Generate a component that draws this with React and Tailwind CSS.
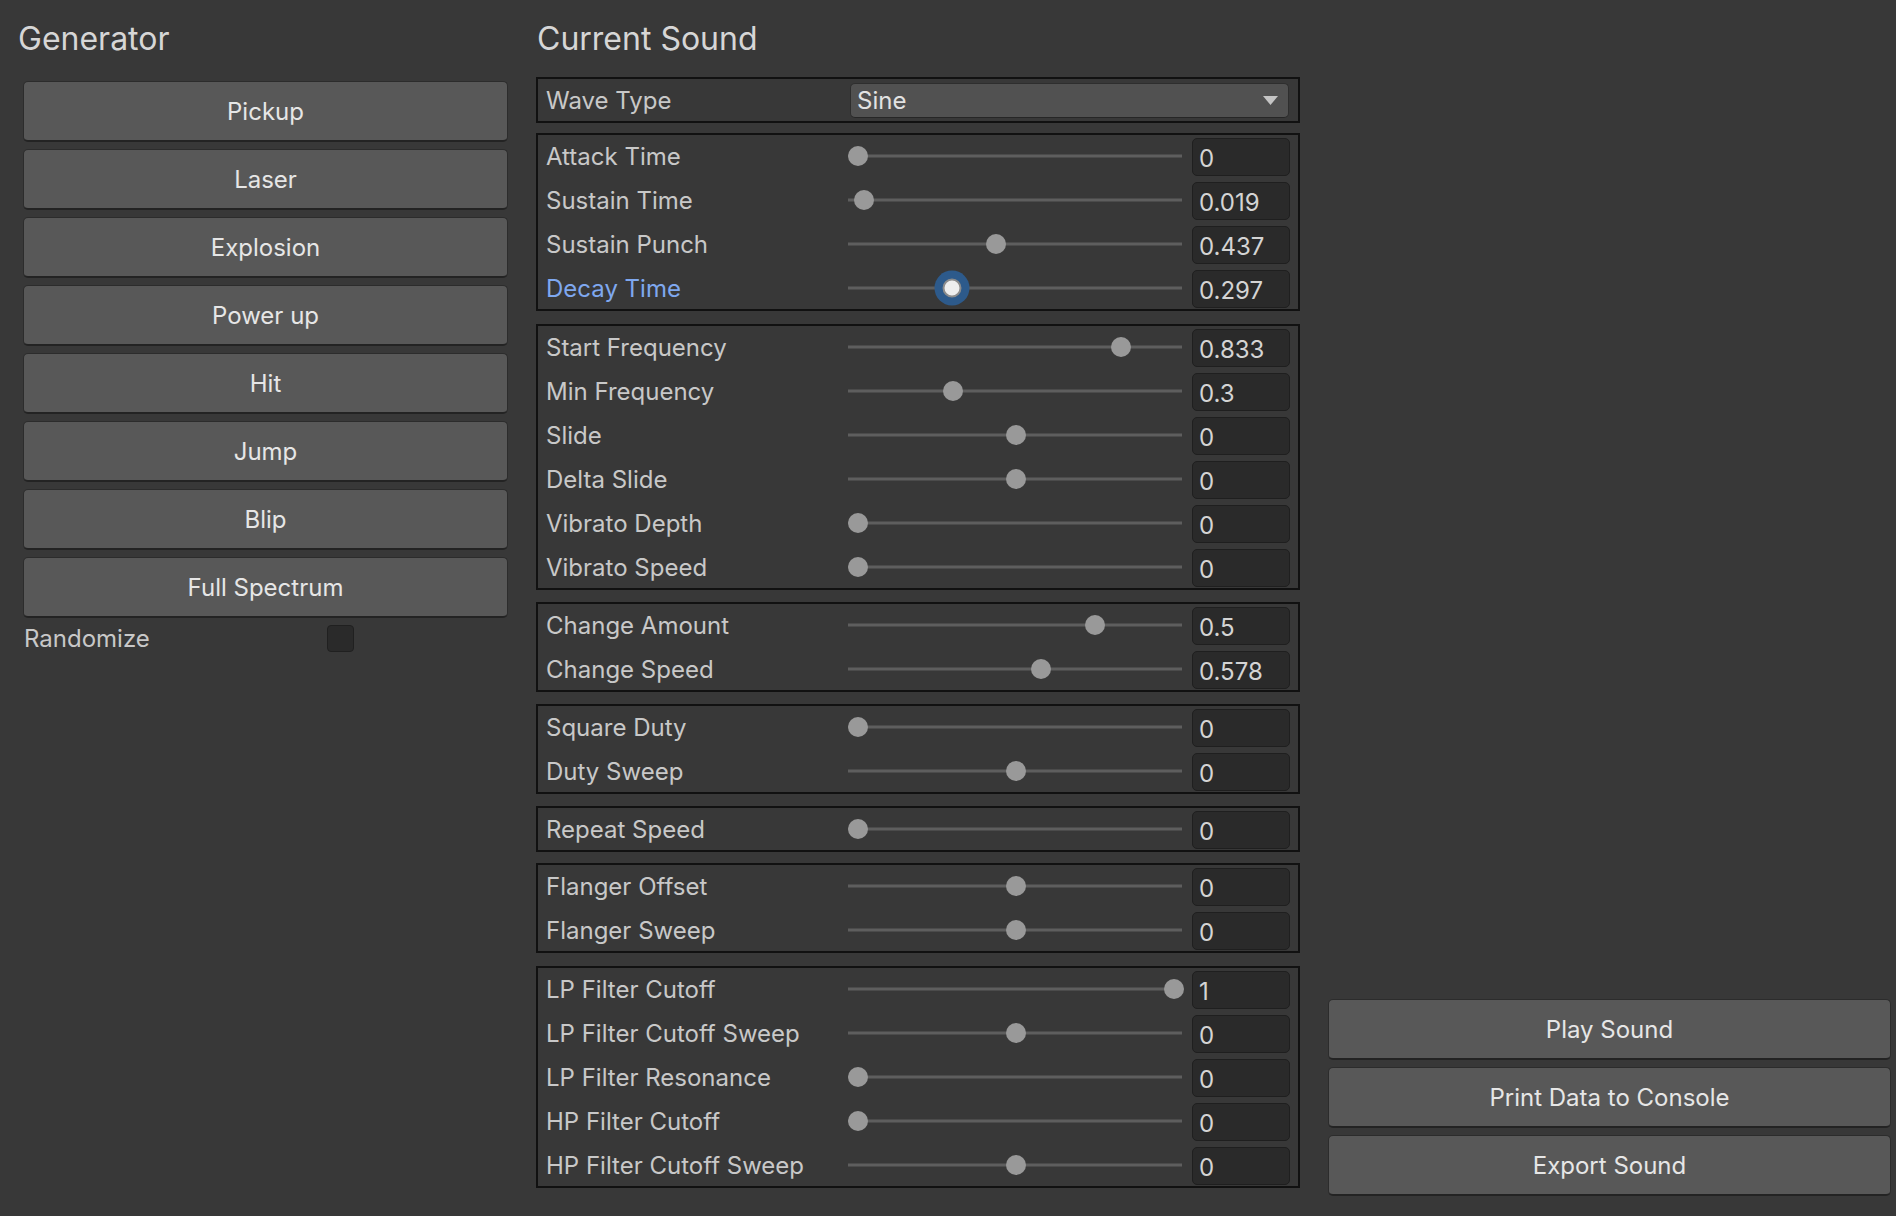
import React from 'react';

const generators = ['Pickup', 'Laser', 'Explosion', 'Power up', 'Hit', 'Jump', 'Blip', 'Full Spectrum'];

// pos = where the thumb sits on the track, 0..1
const groups = [
  {
    gap: 'mt-[10px]',
    rows: [
      { label: 'Attack Time', value: '0', pos: 0 },
      { label: 'Sustain Time', value: '0.019', pos: 0.019 },
      { label: 'Sustain Punch', value: '0.437', pos: 0.437 },
      { label: 'Decay Time', value: '0.297', pos: 0.297, focused: true },
    ],
  },
  {
    gap: 'mt-[13px]',
    rows: [
      { label: 'Start Frequency', value: '0.833', pos: 0.833 },
      { label: 'Min Frequency', value: '0.3', pos: 0.3 },
      { label: 'Slide', value: '0', pos: 0.5 },
      { label: 'Delta Slide', value: '0', pos: 0.5 },
      { label: 'Vibrato Depth', value: '0', pos: 0 },
      { label: 'Vibrato Speed', value: '0', pos: 0 },
    ],
  },
  {
    gap: 'mt-[12px]',
    rows: [
      { label: 'Change Amount', value: '0.5', pos: 0.75 },
      { label: 'Change Speed', value: '0.578', pos: 0.578 },
    ],
  },
  {
    gap: 'mt-[12px]',
    rows: [
      { label: 'Square Duty', value: '0', pos: 0 },
      { label: 'Duty Sweep', value: '0', pos: 0.5 },
    ],
  },
  {
    gap: 'mt-[12px]',
    rows: [{ label: 'Repeat Speed', value: '0', pos: 0 }],
  },
  {
    gap: 'mt-[11px]',
    rows: [
      { label: 'Flanger Offset', value: '0', pos: 0.5 },
      { label: 'Flanger Sweep', value: '0', pos: 0.5 },
    ],
  },
  {
    gap: 'mt-[13px]',
    rows: [
      { label: 'LP Filter Cutoff', value: '1', pos: 1 },
      { label: 'LP Filter Cutoff Sweep', value: '0', pos: 0.5 },
      { label: 'LP Filter Resonance', value: '0', pos: 0 },
      { label: 'HP Filter Cutoff', value: '0', pos: 0 },
      { label: 'HP Filter Cutoff Sweep', value: '0', pos: 0.5 },
    ],
  },
];

function UnityButton({ children }) {
  return (
    <button className="flex h-[61px] w-full items-center justify-center rounded-[5px] border border-[#2c2c2c] border-b-2 border-b-[#232323] bg-[#585858] pt-[2px] text-[24px] text-[#e6e6e6]">
      {children}
    </button>
  );
}

function Box({ className = '', children }) {
  return (
    <div className={`border-2 border-[#111111] ${className}`}>
      <div className="-my-px">{children}</div>
    </div>
  );
}

function SliderRow({ label, value, pos, focused }) {
  return (
    <div className="flex h-[44px] items-center pl-[8px] pr-[8px]">
      <p className={`w-[302px] pt-[2px] text-[24px] ${focused ? 'text-[#7fa8ef]' : 'text-[#c8c8c8]'}`}>
        {label}
      </p>
      <div className="relative h-full w-[334px]">
        <div className="absolute left-0 right-0 top-1/2 h-[3px] -translate-y-1/2 bg-[#5e5e5e]" />
        {focused ? (
          <div
            className="absolute top-1/2 flex h-[35px] w-[35px] -translate-x-1/2 -translate-y-1/2 items-center justify-center rounded-full bg-[#2d5a8b]"
            style={{ left: 10 + pos * 316 }}
          >
            <div className="h-[19px] w-[19px] rounded-full border-2 border-[#8c8c8c] bg-[#eeeeee]" />
          </div>
        ) : (
          <div
            className="absolute top-1/2 h-[20px] w-[20px] -translate-x-1/2 -translate-y-1/2 rounded-full bg-[#999999]"
            style={{ left: 10 + pos * 316 }}
          />
        )}
      </div>
      <div className="ml-[10px] mt-[2px] flex h-[38px] w-[98px] items-center rounded-[5px] border border-[#1f1f1f] bg-[#2a2a2a] pl-[6px] pt-[3px] text-[24px] text-[#d4d4d4]">
        {value}
      </div>
    </div>
  );
}

export default function App() {
  return (
    <div
      className="flex h-[1216px] w-[1896px] overflow-hidden bg-[#383838]"
      style={{ fontFamily: 'Inter, "Noto Sans", sans-serif' }}
    >
      {/* generator column */}
      <div className="flex w-[508px] flex-col pl-[23px]">
        <p className="-ml-[5px] pt-[19px] text-[32px] leading-[40px] text-[#d6d6d6]">Generator</p>
        <div className="mt-[22px] flex flex-col gap-[7px]">
          {generators.map((g) => (
            <UnityButton key={g}>{g}</UnityButton>
          ))}
        </div>
        <div className="mt-[3px] flex h-[34px] items-center">
          <p className="w-[304px] pl-[1px] pt-[2px] text-[24px] text-[#c8c8c8]">Randomize</p>
          <div className="h-[27px] w-[27px] rounded-[4px] border border-[#202020] bg-[#2a2a2a]" />
        </div>
      </div>

      {/* current sound column */}
      <div className="ml-[28px] flex w-[764px] flex-col">
        <p className="pl-[1px] pt-[19px] text-[32px] leading-[40px] text-[#d6d6d6]">Current Sound</p>
        <Box className="mt-[18px]">
          <div className="flex h-[44px] items-center pl-[8px]">
            <p className="w-[304px] pt-[2px] text-[24px] text-[#c8c8c8]">Wave Type</p>
            <div className="flex h-[35px] w-[439px] items-center justify-between rounded-[5px] border border-[#2e2e2e] border-b-[#262626] bg-[#515151] pl-[6px] pr-[10px] pt-[2px] text-[24px] text-[#e2e2e2]">
              <span>Sine</span>
              <svg width="15" height="9" viewBox="0 0 15 9" className="-mt-[2px]">
                <path d="M0 0 L15 0 L7.5 9 Z" fill="#c4c4c4" />
              </svg>
            </div>
          </div>
        </Box>
        {groups.map((grp, i) => (
          <Box key={i} className={grp.gap}>
            {grp.rows.map((r) => (
              <SliderRow key={r.label} {...r} />
            ))}
          </Box>
        ))}
      </div>

      {/* actions column */}
      <div className="ml-[28px] mr-[5px] flex flex-1 flex-col justify-end gap-[7px] pb-[20px]">
        <UnityButton>Play Sound</UnityButton>
        <UnityButton>Print Data to Console</UnityButton>
        <UnityButton>Export Sound</UnityButton>
      </div>
    </div>
  );
}
